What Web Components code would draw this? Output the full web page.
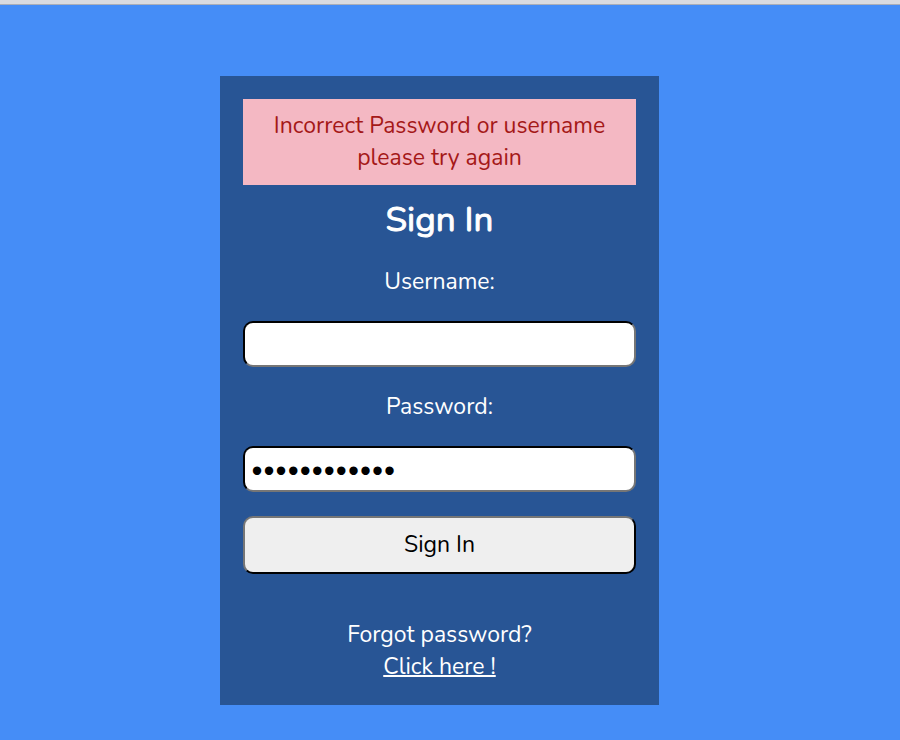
<!DOCTYPE html>
<html lang="en"><head><meta charset="utf-8"><title>Sign In</title>
<style>
html,body{margin:0;min-height:100%}
body{background:#458df7;font:23px/32px Nunito,Lato,"Open Sans","Noto Sans",sans-serif;color:#fff}
</style></head><body>
<sign-in-page>
<sign-in-card>
<alert-banner slot="alert">Incorrect Password or username please try again</alert-banner>
</sign-in-card>
</sign-in-page>
<script>
const define=(name,html)=>customElements.define(name,class extends HTMLElement{
constructor(){super();this.attachShadow({mode:'open'}).innerHTML=html;}
});
define('sign-in-page',`<style>
:host{display:flex;flex-direction:column;min-height:100vh;box-sizing:border-box;border-top:4px solid #d9dbe0}
.edge{height:1px;background:#aaaeb8}
main{display:flex;justify-content:center;padding:71px 25px 32px 4px}
</style><div class="edge"></div><main><slot></slot></main>`);
define('alert-banner',`<style>
:host{display:block;background:#f4b8c3;color:#a51818;padding:11px 24px;text-align:center}
</style><div role="alert"><slot></slot></div>`);
define('sign-in-card',`<style>
:host{display:block;box-sizing:border-box;flex:0 1 439px;background:#285595;padding:23px 23px 22px;text-align:center}
h1{margin:14px 0 25px;font-size:35px;line-height:42px;font-weight:400;-webkit-text-stroke:1px currentColor}
form{display:flex;flex-direction:column}
label{margin-bottom:23px}
input{box-sizing:border-box;width:100%;height:46px;margin:0 0 24px;padding:0 6px;border:2px solid;border-color:#000 #767676 #767676 #000;border-radius:10px;background:#fff;color:#000;font:inherit}
button{height:58px;border:2px solid;border-color:#767676 #000 #000 #767676;border-radius:10px;background:#efefef;color:#000;font:inherit}
p{margin:45px 0 0}
a{display:block;color:inherit;text-decoration-thickness:2px}
</style><slot name="alert"></slot><h1>Sign In</h1>
<form><label for="u">Username:</label><input id="u" type="text">
<label for="p">Password:</label><input id="p" type="password" value="abcdefghijkl">
<button type="button">Sign In</button></form>
<p>Forgot password? <a href="#">Click here !</a></p>`);
</script></body></html>
